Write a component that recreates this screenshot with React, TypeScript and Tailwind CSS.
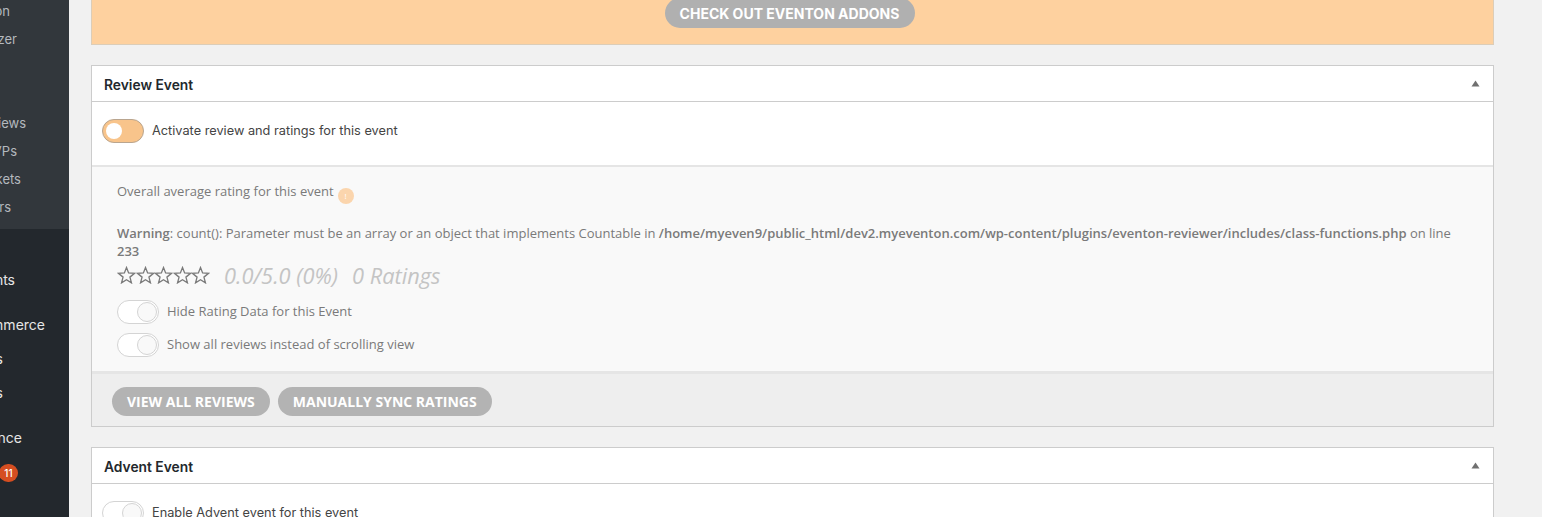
import React from "react";

const sans = "font-['Inter',sans-serif]";
const open = "font-['Open_Sans',sans-serif]";

const Toggle = ({ on = false }: { on?: boolean }) => {
  if (on) {
    return (
      <div className="flex items-center w-[42px] h-[24px] rounded-full bg-[#f8c48b] border border-[#b9a58f] pl-[3px] shrink-0">
        <div className="w-[16px] h-[16px] rounded-full bg-white" />
      </div>
    );
  }
  return (
    <div className="flex items-center justify-end w-[42px] h-[24px] rounded-full bg-white border border-[#d4d4d4] pr-[1px] shrink-0">
      <div className="w-[20px] h-[20px] rounded-full bg-[#f9f9f9] border border-[#d4d4d4]" />
    </div>
  );
};

const Caret = () => (
  <svg width="9" height="7" viewBox="0 0 9 7" className="shrink-0">
    <path d="M4.5 0.5L8.5 6.5H0.5Z" fill="#707070" />
  </svg>
);

const Star = () => (
  <svg width="19" height="18" viewBox="0 0 24 23" className="shrink-0" fill="none" stroke="#7a7a7a" strokeWidth="1.7" strokeLinejoin="miter">
    <path d="M12 2L14.7 8.9L22.2 9.4L16.4 14.2L18.3 21.5L12 17.5L5.7 21.5L7.6 14.2L1.8 9.4L9.3 8.9Z" />
  </svg>
);

const PillButton = ({ children }: { children: React.ReactNode }) => (
  <div className={`flex items-center h-[29px] px-[15px] rounded-full bg-[#b3b3b3] text-white text-[14px] font-bold ${open}`}>
    {children}
  </div>
);

const PanelHeader = ({ title }: { title: string }) => (
  <div className="flex items-center justify-between h-[36px] pl-[12px] pr-[13px] border-b border-[#cccccc]">
    <span className={`mt-[3px] text-[13.8px] font-semibold text-[#23282d] ${sans}`}>{title}</span>
    <Caret />
  </div>
);

const SideRow = ({ label, pr, cls }: { label: string; pr: string; cls: string }) => (
  <div className={`flex items-center justify-end whitespace-nowrap ${pr} ${cls}`}>{label}</div>
);

const Sidebar = () => (
  <aside className={`w-[69px] shrink-0 h-full overflow-hidden bg-[#23282d] text-[13px] ${sans}`}>
    <div className="h-[229px] bg-[#32373c] text-[#b4b9be] -mt-[2px] box-content pb-[2px]">
      <SideRow label="Customization" pr="pr-[59px]" cls="h-[28px]" />
      <SideRow label="Organizer" pr="pr-[52px]" cls="h-[28px]" />
      <div className="h-[56px]" />
      <SideRow label="Reviews" pr="pr-[43px]" cls="h-[28px]" />
      <SideRow label="RSVPs" pr="pr-[52px]" cls="h-[28px]" />
      <SideRow label="Tickets" pr="pr-[48px]" cls="h-[28px]" />
      <SideRow label="Speakers" pr="pr-[58px]" cls="h-[28px]" />
    </div>
    <div className="text-[#e6e6e6] text-[14px]">
      <SideRow label="Events" pr="pr-[54px]" cls="h-[34px] mt-[33px]" />
      <SideRow label="WooCommerce" pr="pr-[24px]" cls="h-[34px] mt-[11px]" />
      <SideRow label="Products" pr="pr-[66px]" cls="h-[34px]" />
      <SideRow label="Analytics" pr="pr-[66px]" cls="h-[34px]" />
      <SideRow label="Appearance" pr="pr-[47px]" cls="h-[34px] mt-[11px]" />
      <div className="flex items-center h-[18px] mt-[10px] -ml-[1px]">
        <span className="flex items-center justify-center w-[19px] h-[18px] rounded-full bg-[#d54e21] text-white text-[10px] font-medium">
          11
        </span>
      </div>
    </div>
  </aside>
);

export default function App() {
  return (
    <div className="flex w-[1542px] h-[517px] overflow-hidden bg-[#f1f1f1]">
      <Sidebar />
      <main className="w-[1403px] ml-[22px] shrink-0">
        <div className="flex justify-center items-end h-[45px] pb-[16px] pr-[6px] bg-[#fed19f] border border-t-0 border-[#dccdb8] overflow-hidden">
          <div className={`flex items-center justify-center shrink-0 w-[250px] h-[30px] rounded-full bg-[#b0b0b0] text-white text-[14px] font-bold ${sans}`}>
            CHECK OUT EVENTON ADDONS
          </div>
        </div>

        <section className="mt-[20px] bg-white border border-[#cccccc]">
          <PanelHeader title="Review Event" />
          <div className="flex items-start h-[65px] pl-[10px] pt-[17px] border-b-2 border-[#e5e5e5]">
            <Toggle on />
            <span className={`ml-[8px] mt-[2px] text-[12.75px] text-[#444444] ${sans}`}>
              Activate review and ratings for this event
            </span>
          </div>

          <div className={`h-[204px] pl-[25px] pr-[24px] pt-[15px] bg-[#f9f9f9] text-[13px] text-[#7a7a7a] ${open}`}>
            <div className="flex items-start h-[42px]">
              <span className="leading-[18px]">Overall average rating for this event</span>
              <span className="flex items-center justify-center w-[16px] h-[16px] ml-[4px] mt-[6px] rounded-full bg-[#fbd5ad] text-white text-[8px]">
                !
              </span>
            </div>
            <p className="leading-[18px]">
              <b className="font-semibold">Warning</b>: count(): Parameter must be an array or an object that implements Countable in{" "}
              <b className="font-semibold">/home/myeven9/public_html/dev2.myeventon.com/wp-content/plugins/eventon-reviewer/includes/class-functions.php</b> on line{" "}
              <b className="font-semibold">233</b>
            </p>
            <div className="flex items-center h-[30px]">
              <div className="flex w-[93px] -space-x-[0.5px]">
                <Star />
                <Star />
                <Star />
                <Star />
                <Star />
              </div>
              <span className="ml-[14px] mt-[2px] text-[21.8px] italic text-[#c4c4c4]">0.0/5.0 (0%)</span>
              <span className="ml-[14px] mt-[2px] text-[21.8px] italic text-[#c4c4c4]">0 Ratings</span>
            </div>
            <div className="flex items-center gap-[8px] mt-[10px]">
              <Toggle />
              <span>Hide Rating Data for this Event</span>
            </div>
            <div className="flex items-center gap-[8px] mt-[9px]">
              <Toggle />
              <span>Show all reviews instead of scrolling view</span>
            </div>
          </div>

          <div className="flex items-start gap-[8px] h-[55px] pl-[20px] pt-[13px] border-t-[3px] border-[#e5e5e5] bg-[#eeeeee]">
            <PillButton>VIEW ALL REVIEWS</PillButton>
            <PillButton>MANUALLY SYNC RATINGS</PillButton>
          </div>
        </section>

        <section className="mt-[20px] bg-white border border-[#cccccc] h-[100px]">
          <PanelHeader title="Advent Event" />
          <div className="flex items-start pl-[10px] pt-[17px]">
            <Toggle />
            <span className={`ml-[8px] mt-[2px] text-[12.75px] text-[#444444] ${sans}`}>
              Enable Advent event for this event
            </span>
          </div>
        </section>
      </main>
    </div>
  );
}
